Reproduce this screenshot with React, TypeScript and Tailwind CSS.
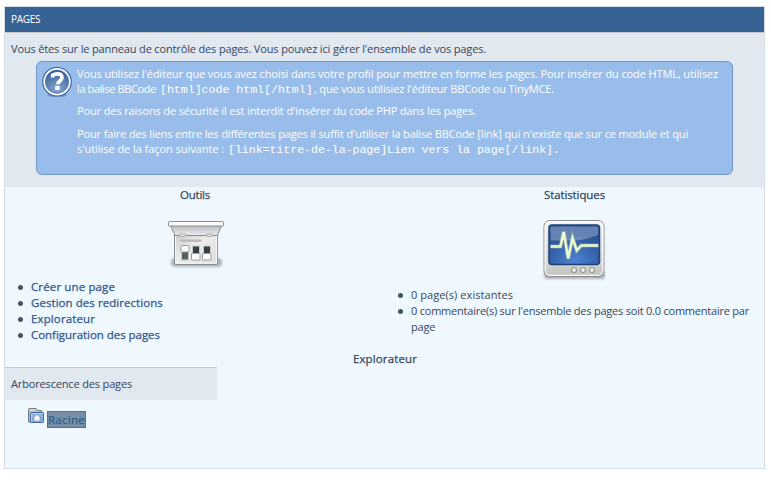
import type { ReactNode } from "react";

const HelpIcon = () => (
  <svg width="32" height="32" viewBox="0 0 32 32" className="block shrink-0">
    <defs>
      <radialGradient id="help" cx="0.5" cy="0.85" r="0.8">
        <stop offset="0" stopColor="#86a9d2" />
        <stop offset="1" stopColor="#3c649d" />
      </radialGradient>
    </defs>
    <ellipse cx="16" cy="29" rx="10" ry="2" fill="#5e7fae" opacity="0.6" />
    <circle cx="16" cy="15.7" r="14.8" fill="#34609c" />
    <circle cx="16" cy="15.7" r="13.7" fill="#fff" />
    <circle cx="16" cy="15.7" r="11.7" fill="url(#help)" stroke="#3b659e" strokeWidth="0.6" />
    <path d="M11.7 11.500V9.300q2-1.500 4.600-1.500 4.700 0 4.700 3.800 0 2-2.100 3.500-1.900 1.300-1.900 3.200" fill="none" stroke="#fff" strokeWidth="3.700" />
    <rect x="14.200" y="19.800" width="4.400" height="4.200" fill="#fff" />
  </svg>
);

const ToolsIcon = () => (
  <svg width="60" height="52" viewBox="0 0 60 52" className="block">
    <defs>
      <linearGradient id="lid" x1="0" y1="0" x2="0" y2="1">
        <stop offset="0" stopColor="#b4b8bc" />
        <stop offset="1" stopColor="#e9ebed" />
      </linearGradient>
      <linearGradient id="body" x1="0" y1="0" x2="1" y2="1">
        <stop offset="0" stopColor="#c9caca" />
        <stop offset="0.45" stopColor="#ececec" />
        <stop offset="1" stopColor="#dcdddd" />
      </linearGradient>
      <filter id="soft1" x="-20%" y="-50%" width="140%" height="200%"><feGaussianBlur stdDeviation="1.3" /></filter>
    </defs>
    <rect x="5" y="39" width="51" height="9" rx="4" fill="#8a929a" opacity="0.65" filter="url(#soft1)" />
    <path d="M8.5 14h43v30q0 1.500-1.500 1.500h-40q-1.500 0-1.500-1.500z" fill="url(#body)" stroke="#8b8e90" />
    <path d="M9.600 15.500v28.500h41V15.500" fill="none" stroke="#fff" opacity="0.8" />
    <path d="M3.500 5h53l-5.300 11.500h-42z" fill="url(#lid)" stroke="#8b8e90" />
    <rect x="2.500" y="2.500" width="55" height="4.500" rx="0.800" fill="#fafafa" stroke="#8b8e90" />
    <rect x="13" y="15" width="7" height="2.500" rx="1.200" fill="#e2e3e4" stroke="#999c9e" strokeWidth="0.800" />
    <rect x="40" y="15" width="7" height="2.500" rx="1.200" fill="#e2e3e4" stroke="#999c9e" strokeWidth="0.800" />
    <rect x="14.500" y="20.500" width="21" height="2.300" rx="1" fill="#b5b7b8" />
    <rect x="15.500" y="32" width="7" height="9" fill="#536264" stroke="#cbcccc" />
    <rect x="26.500" y="27" width="7" height="9" fill="#344144" stroke="#cbcccc" />
    <rect x="37.500" y="27" width="7" height="9" fill="#344144" stroke="#cbcccc" />
    <g fill="#fdfdfd" stroke="#9b9d9e">
      <rect x="15" y="26.500" width="8" height="6.500" rx="0.500" />
      <rect x="25.500" y="34.500" width="8.500" height="6.500" rx="0.500" />
      <rect x="36.500" y="34.500" width="8.500" height="6.500" rx="0.500" />
    </g>
  </svg>
);

const MonitorIcon = () => (
  <svg width="64" height="62" viewBox="0 0 64 62" className="block">
    <defs>
      <linearGradient id="frame" x1="0" y1="0" x2="0" y2="1">
        <stop offset="0" stopColor="#f4f4f2" />
        <stop offset="0.750" stopColor="#d5d6d2" />
        <stop offset="1" stopColor="#bfc1bc" />
      </linearGradient>
      <radialGradient id="screen" cx="0.500" cy="0.900" r="0.700">
        <stop offset="0" stopColor="#4c83d5" />
        <stop offset="1" stopColor="#2b5396" />
      </radialGradient>
      <filter id="soft2" x="-20%" y="-20%" width="140%" height="140%"><feGaussianBlur stdDeviation="1" /></filter>
    </defs>
    <rect x="2" y="52" width="61" height="8" rx="3" fill="#8b9299" opacity="0.700" filter="url(#soft2)" />
    <rect x="2" y="1.500" width="60" height="56" rx="6" fill="url(#frame)" stroke="#8b8d89" />
    <rect x="3.200" y="2.700" width="57.600" height="53.600" rx="5" fill="none" stroke="#fff" opacity="0.900" strokeWidth="1.200" />
    <rect x="7" y="6" width="50.500" height="39.500" rx="3" fill="url(#screen)" stroke="#1f407b" strokeWidth="1.500" />
    <path d="M8.500 8.500q0-1 1-1H55q1 0 1 1V16q-13 5.500-26 5.500H8.500z" fill="#fff" opacity="0.280" />
    <path d="M8.500 27.500h10l3.200-14.500 4.500 26.500 4.300-20.500 4.300 12.500 4.500-5h17" fill="none" stroke="#b6d89c" strokeWidth="4" opacity="0.450" />
    <path d="M8.500 27.500h10l3.200-14.500 4.500 26.500 4.300-20.500 4.300 12.500 4.500-5h17" fill="none" stroke="#effbd0" strokeWidth="2.400" />
    <g fill="#eeeeec" stroke="#969894" strokeWidth="1.200">
      <circle cx="32" cy="51" r="2.500" />
      <circle cx="41" cy="51" r="2.500" />
      <circle cx="50" cy="51" r="2.500" />
    </g>
  </svg>
);

const FolderIcon = () => (
  <svg width="16" height="16" viewBox="0 0 16 16" className="block shrink-0">
    <path d="M.5 14V1.500q0-1 1-1H8l1.500 2h3.500q1 0 1 1V14z" fill="#bfc0bd" stroke="#777975" />
    <path d="M2 2h5" stroke="#eee" />
    <rect x="2.500" y="4.500" width="13" height="10" rx="0.800" fill="#8cb0df" stroke="#376aa8" />
    <path d="M3.500 13.500v-8h11" fill="none" stroke="#b9d1ee" />
    <path d="M9 6.200l4.200 4h-1.200v3H6v-3H4.800z" fill="#f2f2f0" stroke="#75889e" strokeWidth="0.700" />
  </svg>
);

const Item = ({ children }: { children: ReactNode }) => (
  <li className="flex">
    <span className="mr-2 mt-[6px] size-[5px] shrink-0 rounded-full bg-[#445268]" />
    <span>{children}</span>
  </li>
);

export default function App() {
  return (
    <div className="h-[480px] w-[771px] overflow-hidden bg-white pl-1 pt-1.5 font-['Open_Sans',sans-serif] text-[11px] whitespace-nowrap text-[#36465c]">
      <main className="h-[463px] w-[761px] border border-[#d4dce6] bg-[#f0f8ff]">
        <header className="h-[26px] border-b border-[#c5c9ce] bg-[#366393] pl-1.5 text-[10px] leading-[25px] tracking-[-0.32px] text-white">
          PAGES
        </header>

        <section className="h-[154px] bg-[#e1e8ef] pt-2">
          <p className="pl-1.5 leading-4 tracking-[-0.149px]">
            Vous êtes sur le panneau de contrôle des pages. Vous pouvez ici gérer l'ensemble de vos pages.
          </p>
          <div className="ml-[31px] mt-1 flex h-[114px] w-[697px] rounded-md border border-[#7197c2] bg-[#99bdea] pl-1 pt-1 text-white">
            <HelpIcon />
            <div className="ml-1 leading-[15px]">
              <p className="tracking-[-0.113px]">
                Vous utilisez l'éditeur que vous avez choisi dans votre profil pour mettre en forme les pages. Pour insérer du code HTML, utilisez
              </p>
              <p className="flex h-[15px]">
                <span className="w-[83px] tracking-[-0.38px]">la balise BBCode</span>
                <code className="w-[154px] pt-0.5 font-['Liberation_Mono',monospace] text-[11.67px] tracking-[-0.06px]">[html]code html[/html]</code>
                <span className="tracking-[-0.165px]">, que vous utilisiez l'éditeur BBCode ou TinyMCE.</span>
              </p>
              <p className="mt-[7px] tracking-[-0.122px]">
                Pour des raisons de sécurité il est interdit d'insérer du code PHP dans les pages.
              </p>
              <p className="mt-2 tracking-[-0.139px]">
                Pour faire des liens entre les différentes pages il suffit d'utiliser la balise BBCode [link] qui n'existe que sur ce module et qui
              </p>
              <p className="flex h-[15px]">
                <span className="w-[151px] tracking-[-0.053px]">s'utilise de la façon suivante :</span>
                <code className="pt-0.5 font-['Liberation_Mono',monospace] text-[11.67px] tracking-[-0.08px]">[link=titre-de-la-page]Lien vers la page[/link].</code>
              </p>
            </div>
          </div>
        </section>

        <section className="flex h-[164px] leading-4">
          <div className="w-[380px]">
            <h2 className="text-center text-[11.5px] font-medium tracking-[-0.2px] [-webkit-text-stroke:0.25px]">Outils</h2>
            <div className="ml-[161px] mt-4">
              <ToolsIcon />
            </div>
            <ul className="ml-[13px] mt-2 text-[11.5px] font-medium text-[#2f5689] [-webkit-text-stroke:0.25px]">
              <Item><a className="tracking-[0.13px]">Créer une page</a></Item>
              <Item><a className="tracking-[0.06px]">Gestion des redirections</a></Item>
              <Item><a className="tracking-[0.13px]">Explorateur</a></Item>
              <Item><a className="tracking-[-0.04px]">Configuration des pages</a></Item>
            </ul>
          </div>
          <div className="w-[379px]">
            <h2 className="text-center text-[11.5px] font-medium tracking-[-0.1px] [-webkit-text-stroke:0.25px]">Statistiques</h2>
            <div className="ml-[157px] mt-4">
              <MonitorIcon />
            </div>
            <ul className="ml-[13px] mt-[6px]">
              <Item><span className="tracking-[0.06px]">0 page(s) existantes</span></Item>
              <Item>
                <span className="tracking-[-0.223px]">
                  0 commentaire(s) sur l'ensemble des pages soit 0.0 commentaire par
                  <br />
                  page
                </span>
              </Item>
            </ul>
          </div>
        </section>

        <section>
          <h2 className="h-4 pl-px text-center text-[11.5px] leading-4 font-medium tracking-[0.13px] [-webkit-text-stroke:0.25px]">Explorateur</h2>
          <div className="h-[33px] w-[212px] border-t border-[#c5cdd5] bg-[#e1e8ef] pl-1.5 leading-[31px] tracking-[-0.155px]">
            Arborescence des pages
          </div>
          <div className="ml-[23px] mt-2 flex">
            <FolderIcon />
            <a className="ml-[3px] mt-[3px] h-[17px] w-[39px] border border-[#5a6f83] bg-[#778ea3] text-[11.5px] leading-4 font-medium tracking-[0.27px] text-[#2d5d94] [-webkit-text-stroke:0.25px]">
              Racine
            </a>
          </div>
        </section>
      </main>
    </div>
  );
}
